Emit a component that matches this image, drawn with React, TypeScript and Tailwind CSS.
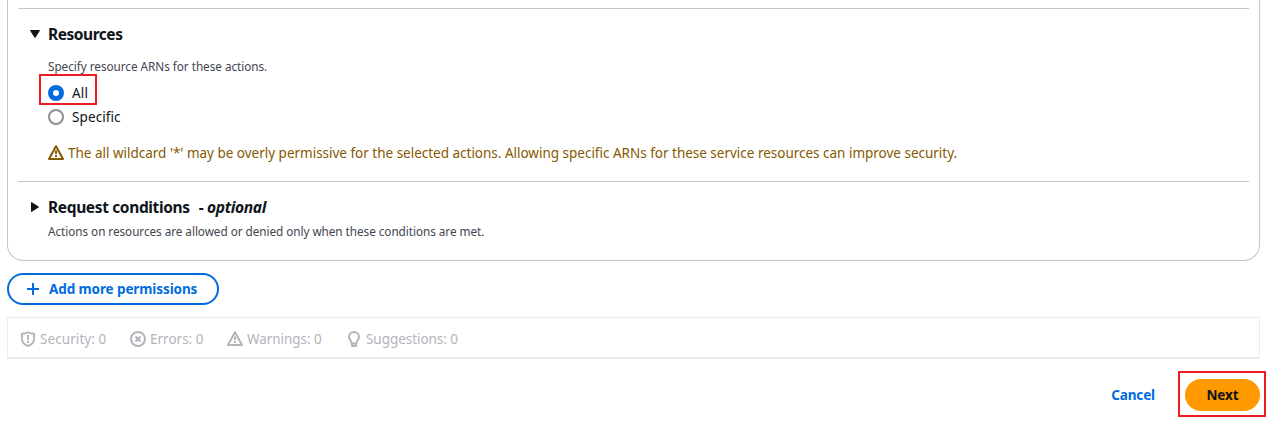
import type { ReactNode } from 'react';

function WarningIcon() {
  return (
    <svg width="16" height="16" viewBox="0 0 16 16" fill="none" stroke="currentColor" strokeWidth="2" strokeLinejoin="round" className="shrink-0">
      <path d="M8 1.2 15 14H1L8 1.2Z" />
      <path d="M8 5.5V9M8 10v2" />
    </svg>
  );
}

function SecurityIcon() {
  return (
    <svg width="16" height="16" viewBox="0 0 16 16" fill="none" stroke="currentColor" strokeWidth="1.9" strokeLinejoin="round" className="shrink-0">
      <path d="M8 1.3c1.9 1.2 3.8 1.5 6 1.5V8c0 3.3-2.3 5.6-6 7-3.7-1.4-6-3.7-6-7V2.8c2.2 0 4.1-.3 6-1.5Z" />
      <path d="M8 4v5M8 10v2" />
    </svg>
  );
}

function ErrorIcon() {
  return (
    <svg width="16" height="16" viewBox="0 0 16 16" fill="none" stroke="currentColor" strokeWidth="2" className="shrink-0">
      <circle cx="8" cy="8" r="7" />
      <path d="m5.500 5.500 5 5M10.500 5.500l-5 5" />
    </svg>
  );
}

function SuggestionIcon() {
  return (
    <svg width="16" height="16" viewBox="0 0 16 16" fill="none" stroke="currentColor" strokeWidth="2" strokeLinejoin="round" className="shrink-0">
      <path d="M5.500 11.500C5.500 9.500 3 9 3 6a5 5 0 0 1 10 0c0 3-2.500 3.500-2.500 5.500v1h-5Z" />
      <path d="M6 12.500V15h4v-2.500" />
    </svg>
  );
}

function Finding({ icon, label, className }: { icon: ReactNode; label: string; className: string }) {
  return (
    <div className={`flex shrink-0 items-center gap-1 ${className}`}>
      {icon}
      <span className="whitespace-nowrap">{label}</span>
    </div>
  );
}

export default function App() {
  return (
    <div className="h-[424px] w-[1282px] overflow-hidden bg-white pl-[7px] font-['Noto_Sans',sans-serif] text-[13.5px] leading-5 text-[#0f141a]">
      <section className="h-[261px] w-[1253px] rounded-b-[16px] border border-t-0 border-[#c6c6cd] px-[10px] pt-2">
        <div className="h-[173px] border-t border-[#c6c6cd] pt-[14px] pl-[30px]">
          <h2 className="-ml-[19px] flex h-[22px] items-center text-[15.5px] font-bold">
            <svg width="12" height="12" viewBox="0 0 12 12" fill="currentColor" stroke="currentColor" strokeLinejoin="round" className="mr-[7px]">
              <path d="M1.500 2.500h9L6 9.500Z" />
            </svg>
            <span className="tracking-[-0.46px]">Resources</span>
          </h2>
          <p className="mt-[13px] h-4 text-[11.75px] leading-4 tracking-[-0.04px] text-[#424650]">Specify resource ARNs for these actions.</p>
          <div className="-ml-[9px] flex h-[31px] w-[58px] items-center border-2 border-[#ed1c24] pt-[7px] pl-[7px]">
            <span className="size-4 rounded-full border-[5px] border-[#006ce0]" />
            <span className="ml-2 tracking-[0.2px]">All</span>
          </div>
          <div className="mt-[2px] flex h-5 items-center">
            <span className="size-4 rounded-full border-2 border-[#8c8c94]" />
            <span className="ml-2 tracking-[0.1px]">Specific</span>
          </div>
          <div className="mt-4 flex h-5 items-center gap-1 text-[#855900]">
            <WarningIcon />
            <span className="whitespace-nowrap tracking-[-0.01px]">The all wildcard '*' may be overly permissive for the selected actions. Allowing specific ARNs for these service resources can improve security.</span>
          </div>
        </div>
        <div className="border-t border-[#c6c6cd] pt-[13px] pl-[30px]">
          <h2 className="-ml-[19px] flex h-[24px] items-center text-[15.5px] font-bold">
            <svg width="12" height="12" viewBox="0 0 12 12" fill="currentColor" stroke="currentColor" strokeLinejoin="round" className="mr-[7px]">
              <path d="M2.500 1.500v9L9.500 6Z" />
            </svg>
            <span className="tracking-[-0.36px]">Request conditions</span>
            <span className="ml-[9px] tracking-[-0.32px]">- <em>optional</em></span>
          </h2>
          <p className="mt-[4px] text-[11.75px] leading-4 tracking-[-0.05px] text-[#424650]">Actions on resources are allowed or denied only when these conditions are met.</p>
        </div>
      </section>

      <button className="mt-3 flex h-8 w-[212px] items-center rounded-full border-2 border-[#006ce0] pl-[17px] font-bold text-[#006ce0]">
        <svg width="14" height="14" viewBox="0 0 14 14" fill="none" stroke="currentColor" strokeWidth="2" className="mr-[9px]">
          <path d="M7 1v12M1 7h12" />
        </svg>
        <span className="whitespace-nowrap tracking-[-0.1px]">Add more permissions</span>
      </button>

      <div className="mt-3 flex h-[42px] w-[1253px] items-center border border-b-2 border-[#ebebf0] pl-[12px] pt-[3px] text-[#b4b4bb]">
        <Finding icon={<SecurityIcon />} label="Security: 0" className="w-[110px] tracking-[0.08px]" />
        <Finding icon={<ErrorIcon />} label="Errors: 0" className="w-[97px]" />
        <Finding icon={<WarningIcon />} label="Warnings: 0" className="w-[119px] tracking-[-0.05px]" />
        <Finding icon={<SuggestionIcon />} label="Suggestions: 0" className="w-[120px] tracking-[-0.05px]" />
      </div>

      <div className="mt-3 flex w-[1259px] items-center justify-end font-bold">
        <button className="mr-[23px] pt-[2px] tracking-[-0.12px] text-[#006ce0]">Cancel</button>
        <div className="flex h-[46px] w-[88px] items-center border-2 border-[#ed1c24] pt-[2px] pl-[5px]">
          <button className="h-8 w-[75px] rounded-full bg-[#ff9900] tracking-[-0.12px]">Next</button>
        </div>
      </div>
    </div>
  );
}
